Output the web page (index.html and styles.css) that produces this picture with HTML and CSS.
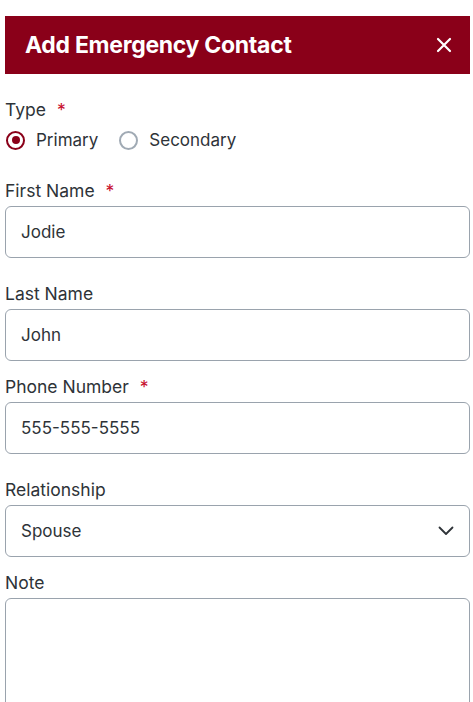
FILE: index.html
```html
<!DOCTYPE html>
<html lang="en">
<head>
  <meta charset="UTF-8">
  <meta name="viewport" content="width=device-width, initial-scale=1.0">
  <title>Add Emergency Contact</title>
  <link rel="stylesheet" href="styles.css">
</head>
<body>
  <div class="modal">
    <div class="modal-header">
      <h2>Add Emergency Contact</h2>
      <button class="close-btn" aria-label="Close">
        <svg width="16" height="16" viewBox="0 0 16 16"><path d="M2 2 L14 14 M14 2 L2 14" stroke="#fff" stroke-width="2.2" stroke-linecap="round"/></svg>
      </button>
    </div>

    <div class="form-group type-group">
      <span class="label">Type <span class="req">*</span></span>
      <div class="radios">
        <label class="radio"><span class="dot checked"></span>Primary</label>
        <label class="radio"><span class="dot"></span>Secondary</label>
      </div>
    </div>

    <div class="form-group required">
      <label class="label" for="first">First Name <span class="req">*</span></label>
      <div class="field">Jodie</div>
    </div>

    <div class="form-group">
      <label class="label" for="last">Last Name</label>
      <div class="field">John</div>
    </div>

    <div class="form-group required">
      <label class="label" for="phone">Phone Number <span class="req">*</span></label>
      <div class="field">555-555-5555</div>
    </div>

    <div class="form-group">
      <label class="label" for="rel">Relationship</label>
      <div class="field select">
        <span>Spouse</span>
        <svg width="16" height="10" viewBox="0 0 16 10"><path d="M1.5 1.5 L8 8 L14.5 1.5" fill="none" stroke="#2e3338" stroke-width="1.8" stroke-linecap="round" stroke-linejoin="round"/></svg>
      </div>
    </div>

    <div class="form-group">
      <label class="label" for="note">Note</label>
      <div class="field note"></div>
    </div>
  </div>
</body>
</html>
```

FILE: styles.css
```css
* { box-sizing: border-box; margin: 0; padding: 0; }
body { font-family: Inter, "Noto Sans", sans-serif; background: #fff; color: #2e3338; }
.modal { width: 465px; margin: 16px 0 0 5px; }
.modal-header {
  height: 58px;
  background: #8a0019;
  display: flex;
  align-items: center;
  justify-content: space-between;
  padding: 0 18px 0 20px;
  margin-bottom: 26px;
}
.modal-header h2 { color: #fff; font-size: 23px; font-weight: 700; letter-spacing: -0.3px; }
.close-btn { background: none; border: none; display: flex; cursor: pointer; }
.form-group { margin-bottom: 16px; }
.form-group.required { margin-bottom: 26px; }
.form-group.type-group { margin-bottom: 30px; }
.label { display: block; font-size: 17.5px; line-height: 20px; margin-bottom: 5px; }
.req { color: #c8102e; margin-left: 6px; }
.radios { display: flex; gap: 20px; margin-top: 9px; }
.radio { display: flex; align-items: center; gap: 11px; font-size: 17px; line-height: 22px; }
.dot {
  width: 19px;
  height: 19px;
  border-radius: 50%;
  border: 2px solid #a0aab4;
  display: inline-block;
  margin-left: 1px;
  position: relative;
}
.dot.checked { border-color: #8a0019; }
.dot.checked::after {
  content: "";
  position: absolute;
  left: 3.5px;
  top: 3.5px;
  width: 8px;
  height: 8px;
  border-radius: 50%;
  background: #8a0019;
}
.field {
  height: 52px;
  border: 1px solid #9aa3ad;
  border-radius: 6px;
  padding: 0 15px;
  display: flex;
  align-items: center;
  font-size: 17px;
}
.field.select { justify-content: space-between; padding-right: 15px; }
.field.note { height: 140px; }
```
